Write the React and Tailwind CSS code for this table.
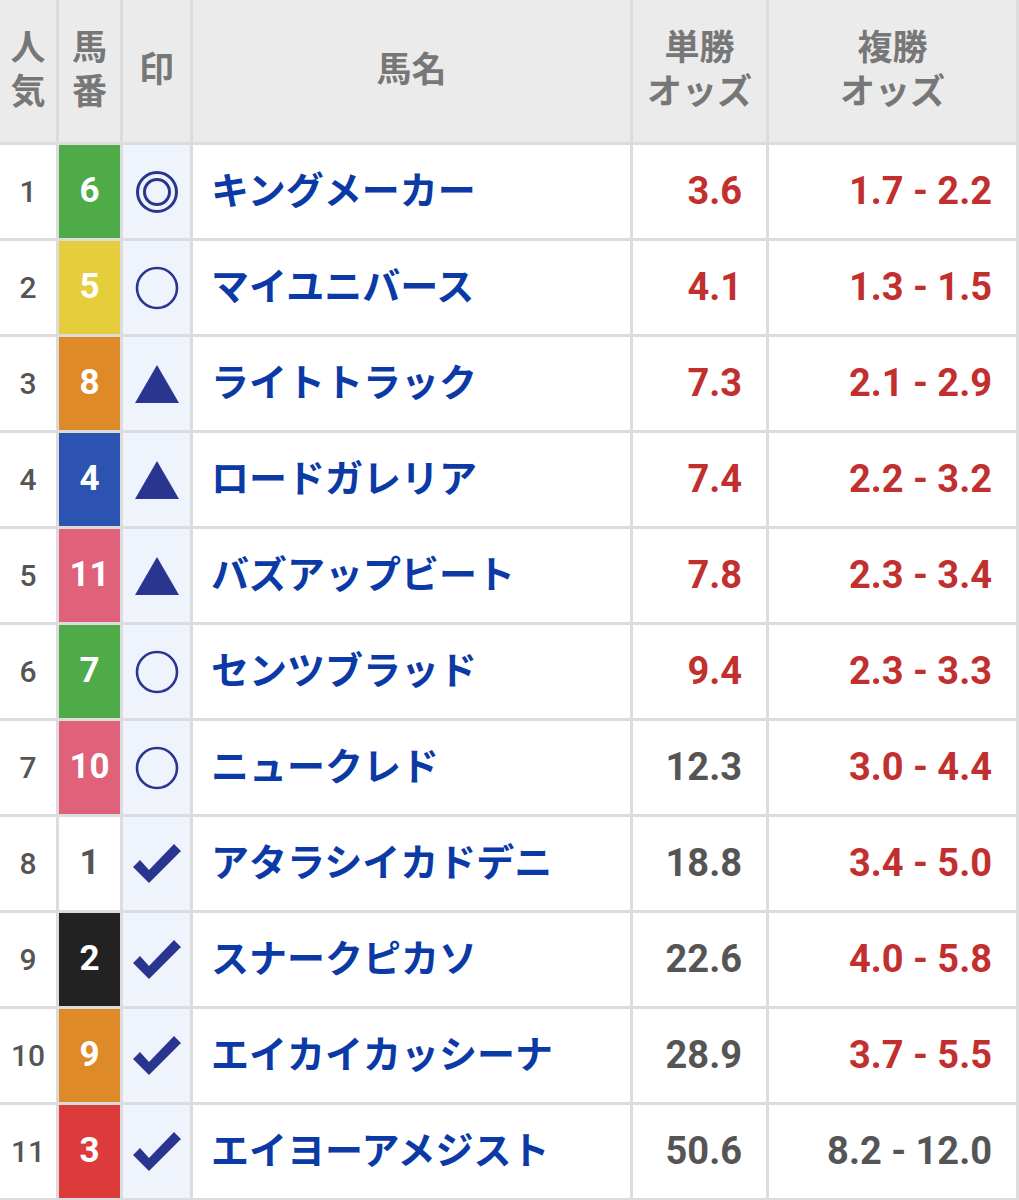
import React from 'react';

const rows = [
  { pop: 1, num: 6, mark: 'double', name: 'キングメーカー', win: '3.6', winRed: true, place: '1.7 - 2.2', placeRed: true },
  { pop: 2, num: 5, mark: 'circle', name: 'マイユニバース', win: '4.1', winRed: true, place: '1.3 - 1.5', placeRed: true },
  { pop: 3, num: 8, mark: 'tri', name: 'ライトトラック', win: '7.3', winRed: true, place: '2.1 - 2.9', placeRed: true },
  { pop: 4, num: 4, mark: 'tri', name: 'ロードガレリア', win: '7.4', winRed: true, place: '2.2 - 3.2', placeRed: true },
  { pop: 5, num: 11, mark: 'tri', name: 'バズアップビート', win: '7.8', winRed: true, place: '2.3 - 3.4', placeRed: true },
  { pop: 6, num: 7, mark: 'circle', name: 'センツブラッド', win: '9.4', winRed: true, place: '2.3 - 3.3', placeRed: true },
  { pop: 7, num: 10, mark: 'circle', name: 'ニュークレド', win: '12.3', winRed: false, place: '3.0 - 4.4', placeRed: true },
  { pop: 8, num: 1, mark: 'check', name: 'アタラシイカドデニ', win: '18.8', winRed: false, place: '3.4 - 5.0', placeRed: true },
  { pop: 9, num: 2, mark: 'check', name: 'スナークピカソ', win: '22.6', winRed: false, place: '4.0 - 5.8', placeRed: true },
  { pop: 10, num: 9, mark: 'check', name: 'エイカイカッシーナ', win: '28.9', winRed: false, place: '3.7 - 5.5', placeRed: true },
  { pop: 11, num: 3, mark: 'check', name: 'エイヨーアメジスト', win: '50.6', winRed: false, place: '8.2 - 12.0', placeRed: false },
];

// horse number -> frame colour class (11 runners)
const frameClass = {
  1: 'bg-white text-[#555]',
  2: 'bg-[#222] text-white',
  3: 'bg-[#dd3b3b] text-white',
  4: 'bg-[#2c53b2] text-white',
  5: 'bg-[#e5cd3b] text-white',
  6: 'bg-[#4eab48] text-white',
  7: 'bg-[#4eab48] text-white',
  8: 'bg-[#df8a28] text-white',
  9: 'bg-[#df8a28] text-white',
  10: 'bg-[#e0617a] text-white',
  11: 'bg-[#e0617a] text-white',
};

const Mark = ({ type }) => {
  if (type === 'double') {
    return (
      <svg width="46" height="46" viewBox="0 0 46 46">
        <circle cx="23" cy="23" r="19.5" fill="none" stroke="#2a3590" strokeWidth="3" />
        <circle cx="23" cy="23" r="12.5" fill="none" stroke="#2a3590" strokeWidth="3" />
      </svg>
    );
  }
  if (type === 'circle') {
    return (
      <svg width="46" height="46" viewBox="0 0 46 46">
        <circle cx="23" cy="23" r="20" fill="none" stroke="#2a3590" strokeWidth="2.6" />
      </svg>
    );
  }
  if (type === 'tri') {
    return (
      <svg width="46" height="40" viewBox="0 0 46 40">
        <polygon points="23,1 45,39 1,39" fill="#2a3590" />
      </svg>
    );
  }
  return (
    <svg width="48" height="40" viewBox="0 0 48 40">
      <polygon points="0,23 7,16 16,26 41,0 48,7 16,39" fill="#2a3590" />
    </svg>
  );
};

export default function App() {
  return (
    <div className="w-[1019px] h-[1200px] bg-white overflow-hidden" style={{ fontFamily: 'Roboto, "Noto Sans CJK JP", sans-serif' }}>
      <div className="grid grid-cols-[56px_61px_67px_437px_133px_247px] gap-[3px] bg-[#dcdcdc] pr-[3px] pb-[3px] w-[1019px]">
        {/* Header */}
        <div className="h-[142px] bg-[#ebebeb] flex flex-col items-center justify-center text-[35px] leading-[44px] font-bold text-[#777]">
          <span>人</span>
          <span>気</span>
        </div>
        <div className="bg-[#ebebeb] flex flex-col items-center justify-center text-[35px] leading-[44px] font-bold text-[#777]">
          <span>馬</span>
          <span>番</span>
        </div>
        <div className="bg-[#ebebeb] flex items-center justify-center text-[35px] font-bold text-[#777]">
          印
        </div>
        <div className="bg-[#ebebeb] flex items-center justify-center text-[35px] font-bold text-[#777]">
          馬名
        </div>
        <div className="bg-[#ebebeb] flex flex-col items-center justify-center text-[35px] leading-[44px] font-bold text-[#777]">
          <span>単勝</span>
          <span>オッズ</span>
        </div>
        <div className="bg-[#ebebeb] flex flex-col items-center justify-center text-[35px] leading-[44px] font-bold text-[#777]">
          <span>複勝</span>
          <span>オッズ</span>
        </div>

        {rows.map((r) => (
          <React.Fragment key={r.pop}>
            <div className="h-[93px] bg-white flex items-center justify-center text-[30px] font-medium text-[#555]">
              {r.pop}
            </div>
            <div className={`flex items-center justify-center text-[35px] font-bold ${frameClass[r.num]}`}>
              {r.num}
            </div>
            <div className="bg-[#eef3fc] flex items-center justify-center">
              <Mark type={r.mark} />
            </div>
            <div className="bg-white flex items-center pl-[18px] text-[38px] font-bold text-[#0b3aa6]">
              {r.name}
            </div>
            <div className={`bg-white flex items-center justify-end pr-[24px] text-[38px] font-bold ${r.winRed ? 'text-[#c1302f]' : 'text-[#555]'}`}>
              {r.win}
            </div>
            <div className={`bg-white flex items-center justify-end pr-[24px] text-[38px] font-bold ${r.placeRed ? 'text-[#c1302f]' : 'text-[#555]'}`}>
              {r.place}
            </div>
          </React.Fragment>
        ))}
      </div>
    </div>
  );
}
